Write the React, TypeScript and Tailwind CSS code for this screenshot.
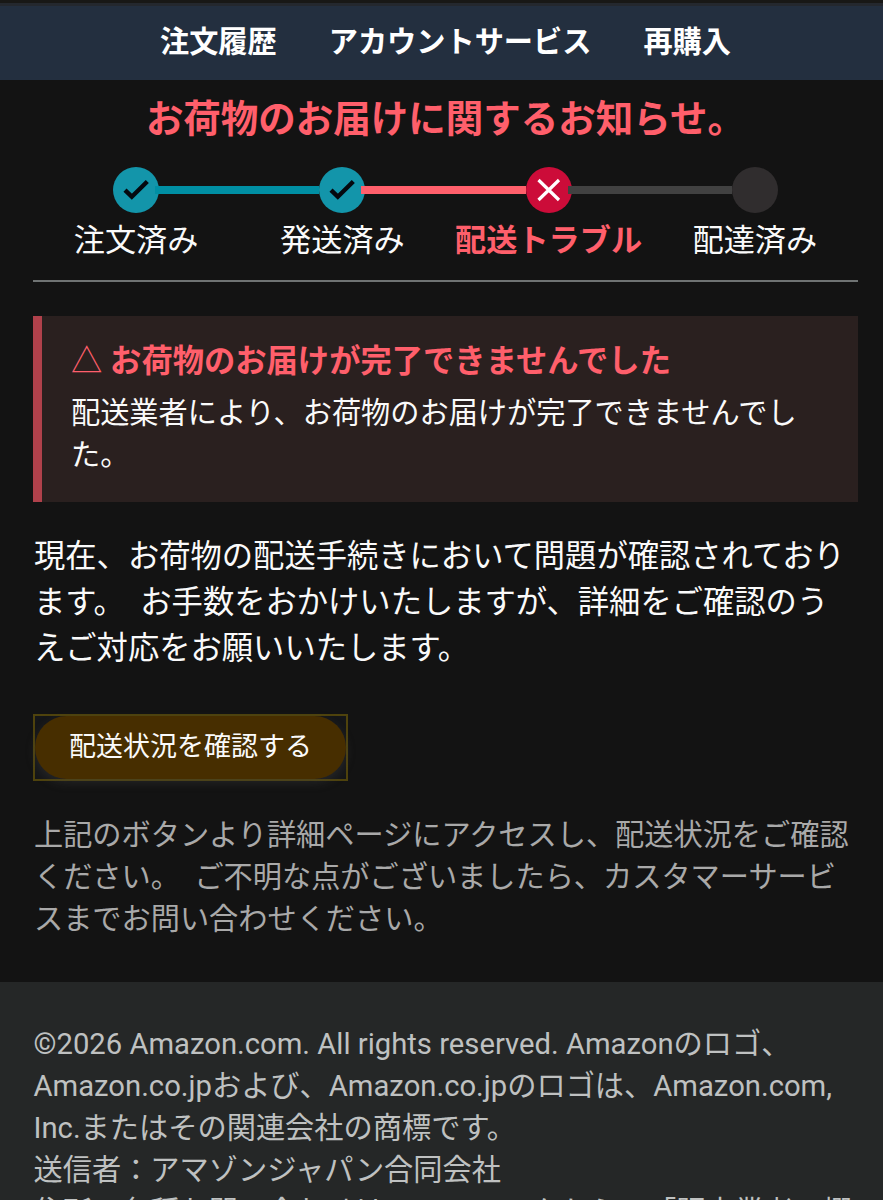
import { Fragment } from "react";

type StepStatus = "done" | "error" | "pending";

interface Step {
  label: string;
  status: StepStatus;
}

const navItems = ["注文履歴", "アカウントサービス", "再購入"];

const steps: Step[] = [
  { label: "注文済み", status: "done" },
  { label: "発送済み", status: "done" },
  { label: "配送トラブル", status: "error" },
  { label: "配達済み", status: "pending" },
];

const circleColor: Record<StepStatus, string> = {
  done: "bg-[#1395aa]",
  error: "bg-[#cc0c39]",
  pending: "bg-[#302d2e]",
};

const barColor: Record<StepStatus, string> = {
  done: "bg-[#008fa4]",
  error: "bg-[#ff5f6b]",
  pending: "bg-[#414141]",
};

const StepIcon: React.FC<{ status: StepStatus }> = ({ status }) => {
  if (status === "pending") return null;
  return (
    <svg width="46" height="46" viewBox="0 0 46 46" fill="none">
      {status === "done" ? (
        <path d="M12 23.2 L18.8 29.7 L34.3 14.5" stroke="#05090f" strokeWidth="4.4" />
      ) : (
        <path
          d="M12.5 13 L33 33 M33 13 L12.5 33"
          stroke="#fff"
          strokeWidth="3.2"
        />
      )}
    </svg>
  );
};

const Progress: React.FC = () => (
  <div className="-ml-px border-b-2 border-[#6f7373] pb-[17px]">
    {/* Círculos y barras */}
    <div className="flex items-center px-20">
      {steps.map((step, i) => (
        <Fragment key={step.label}>
          {i > 0 && (
            <div
              className={`relative -ml-1 h-2 flex-1 ${barColor[step.status]}`}
            />
          )}
          <div
            className={`relative h-[46px] w-[46px] shrink-0 rounded-full ${circleColor[step.status]}`}
          >
            <StepIcon status={step.status} />
          </div>
        </Fragment>
      ))}
    </div>
    {/* Etiquetas */}
    <div className="mt-1.5 grid grid-cols-4 text-center text-[31.2px] leading-[44px] whitespace-nowrap">
      {steps.map((step) => (
        <div
          key={step.label}
          className={
            step.status === "error" ? "font-bold text-[#ff5f6b]" : undefined
          }
        >
          {step.label}
        </div>
      ))}
    </div>
  </div>
);

const App: React.FC = () => {
  return (
    <div
      lang="ja"
      className="h-[1200px] overflow-hidden bg-[#131313] font-[Roboto,'Noto_Sans_CJK_JP',sans-serif] text-[#fafafa]"
    >
      <div className="h-[3px] bg-[#181816]" />
      <nav className="flex h-[77px] justify-center gap-[52px] border-t-[3px] border-[#24282e] bg-[#232f3f] pl-2 text-[29.2px] leading-[73px] font-bold text-white">
        {navItems.map((item) => (
          <span key={item}>{item}</span>
        ))}
      </nav>

      <main className="h-[902px] pr-[25px] pl-[34px]">
        <h1 className="pt-3 pr-px text-center text-[37.5px] leading-[54px] font-bold text-[#ff5f6b]">
          お荷物のお届けに関するお知らせ。
        </h1>
        <div className="pt-[21px]">
          <Progress />
        </div>

        <section className="mt-[34px] -ml-px h-[186px] border-l-[9px] border-[#b0414b] bg-[#2a201f] pt-6 pr-[30px] pl-[29px]">
          <h2 className="text-[31.3px] leading-[44px] font-bold text-[#ff5f6b]">
            <span className="font-normal">△</span> お荷物のお届けが完了できませんでした
          </h2>
          <p className="mt-2 text-[29.2px] leading-[42px]">
            配送業者により、お荷物のお届けが完了できませんでした。
          </p>
        </section>

        <p className="mt-8 text-[31.3px] leading-[46px]">
          現在、お荷物の配送手続きにおいて問題が確認されております。&nbsp; お手数をおかけいたしますが、詳細をご確認のうえご対応をお願いいたします。
        </p>

        <div className="mt-[42px] -ml-px w-[315px] border-2 border-[#4f430d] bg-[#151618]">
          <button
            type="button"
            className="block h-[63px] w-full rounded-full bg-[#472e00] text-center text-[27px] shadow-[0_4px_10px_rgba(70,70,70,0.35)]"
          >
            配送状況を確認する
          </button>
        </div>

        <p className="mt-[33px] text-[29.2px] leading-[42px] text-[#a9a9a9]">
          上記のボタンより詳細ページにアクセスし、配送状況をご確認ください。&nbsp; ご不明な点がございましたら、カスタマーサービスまでお問い合わせください。
        </p>
      </main>

      <footer className="h-[218px] overflow-hidden bg-[#252727] pt-[41px] pr-[25px] pl-[33.5px] text-[29.23px] leading-[42px] text-[#bfc1c1]">
        <p>
          ©2026 Amazon.com. All rights reserved. Amazonのロゴ、Amazon.co.jpおよび、Amazon.co.jpのロゴは、Amazon.com, Inc.またはその関連会社の商標です。
        </p>
        <p>送信者：アマゾンジャパン合同会社</p>
        <p className="whitespace-nowrap [text-spacing-trim:space-all]">
          住所、各種お問い合わせは、このリンクから、「販売業者」欄
        </p>
      </footer>
    </div>
  );
};

export default App;
